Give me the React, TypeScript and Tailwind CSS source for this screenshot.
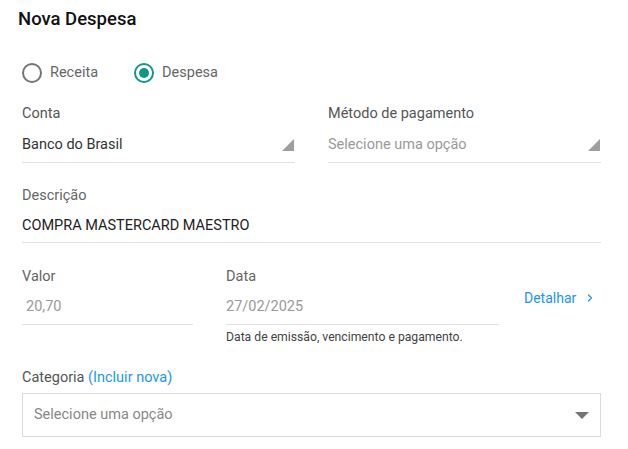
import { ChevronRight } from 'lucide-react'

function Corner() {
  return (
    <svg width="12" height="12" viewBox="0 0 12 12" className="mr-[1px] shrink-0">
      <polygon points="12,0 12,12 0,12" fill="#9e9e9e" />
    </svg>
  )
}

function Radio({ label, checked }: { label: string; checked?: boolean }) {
  return (
    <label className="flex items-center gap-2">
      <span
        className={
          checked
            ? 'flex h-5 w-5 items-center justify-center rounded-full border-2 border-[#129688]'
            : 'flex h-5 w-5 items-center justify-center rounded-full border-2 border-[#757575]'
        }
      >
        {checked && <span className="h-2.5 w-2.5 rounded-full bg-[#129688]" />}
      </span>
      <span className="text-[14.5px] leading-[20px] text-[#666]">{label}</span>
    </label>
  )
}

export default function App() {
  return (
    <div className="h-[449px] w-[628px] bg-white pl-[22px] pr-[27px] pt-[8px] font-['Roboto',sans-serif]">
      <h2 className="-ml-1 text-[18.5px] font-medium leading-[22px] text-[#111]">Nova Despesa</h2>

      <div className="mt-[33px] flex items-center gap-[36px]">
        <Radio label="Receita" />
        <Radio label="Despesa" checked />
      </div>

      <div className="mt-[22px] grid grid-cols-2 gap-[33px]">
        <div>
          <div className="text-[14.5px] leading-[18px] text-[#555]">Conta</div>
          <div className="mt-[13px] flex items-center justify-between border-b border-[#e0e0e0] pb-[8px]">
            <span className="text-[14.5px] leading-[18px] text-[#333]">Banco do Brasil</span>
            <Corner />
          </div>
        </div>
        <div>
          <div className="text-[14.5px] leading-[18px] text-[#555]">Método de pagamento</div>
          <div className="mt-[13px] flex items-center justify-between border-b border-[#e0e0e0] pb-[8px]">
            <span className="text-[14.5px] leading-[18px] text-[#9a9a9a]">Selecione uma opção</span>
            <Corner />
          </div>
        </div>
      </div>

      <div className="mt-[24px]">
        <div className="text-[14.5px] leading-[18px] text-[#666]">Descrição</div>
        <div className="mt-[12px] border-b border-[#e0e0e0] pb-[7px] text-[14.5px] leading-[18px] text-[#222]">
          COMPRA MASTERCARD MAESTRO
        </div>
      </div>

      <div className="mt-[25px] flex">
        <div className="w-[171px]">
          <div className="text-[14.5px] leading-[18px] text-[#666]">Valor</div>
          <div className="mt-[12px] border-b border-[#e0e0e0] pb-[8px] pl-[4px] text-[14.5px] leading-[18px] text-[#9a9a9a]">
            20,70
          </div>
        </div>
        <div className="ml-[33px] w-[273px]">
          <div className="text-[14.5px] leading-[18px] text-[#666]">Data</div>
          <div className="mt-[12px] border-b border-[#e0e0e0] pb-[8px] text-[14.5px] leading-[18px] text-[#9a9a9a]">
            27/02/2025
          </div>
          <div className="mt-[4px] text-[12.2px] leading-[16px] text-[#444]">
            Data de emissão, vencimento e pagamento.
          </div>
        </div>
        <div className="ml-[25px] mt-[21px] flex h-[18px] items-center gap-[8px] text-[14px] text-[#2196f3]">
          <span>Detalhar</span>
          <ChevronRight size={12} strokeWidth={2.5} />
        </div>
      </div>

      <div className="mt-[24px]">
        <div className="text-[14.5px] leading-[18px] text-[#555]">
          Categoria <span className="text-[#2196f3]">(Incluir nova)</span>
        </div>
        <div className="mt-[6px] flex h-[44px] items-center justify-between border border-[#dcdcdc] pl-[11px] pr-[11px]">
          <span className="text-[14.5px] text-[#888]">Selecione uma opção</span>
          <svg width="14" height="7" viewBox="0 0 14 7">
            <polygon points="0,0 14,0 7,7" fill="#757575" />
          </svg>
        </div>
      </div>
    </div>
  )
}
